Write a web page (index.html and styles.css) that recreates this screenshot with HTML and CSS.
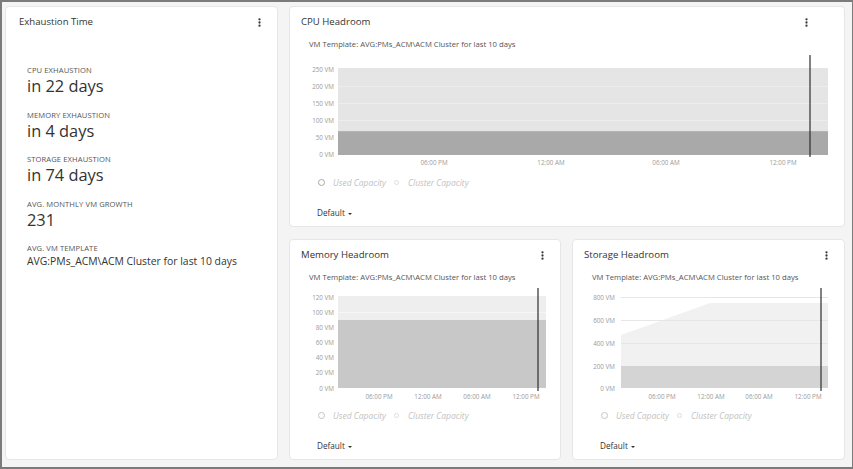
FILE: index.html
```
<!DOCTYPE html>
<html>
<head>
<meta charset="utf-8">
<link rel="stylesheet" href="styles.css">
</head>
<body>
<div class="frame">
  <section class="panel exhaust">
    <header class="panel-head">
      <h2>Exhaustion Time</h2>
      <svg class="kebab" width="3" height="9" viewBox="0 0 3 9"><circle cx="1.5" cy="1.3" r="1.15"/><circle cx="1.5" cy="4.5" r="1.15"/><circle cx="1.5" cy="7.7" r="1.15"/></svg>
    </header>
    <div class="stats">
      <div class="stat"><div class="stat-label">CPU EXHAUSTION</div><div class="stat-value">in 22 days</div></div>
      <div class="stat"><div class="stat-label">MEMORY EXHAUSTION</div><div class="stat-value">in 4 days</div></div>
      <div class="stat"><div class="stat-label">STORAGE EXHAUSTION</div><div class="stat-value">in 74 days</div></div>
      <div class="stat"><div class="stat-label">AVG. MONTHLY VM GROWTH</div><div class="stat-value">231</div></div>
      <div class="stat"><div class="stat-label">AVG. VM TEMPLATE</div><div class="stat-text">AVG:PMs_ACM\ACM Cluster for last 10 days</div></div>
    </div>
  </section>

  <section class="panel cpu">
    <header class="panel-head cpu-head">
      <h2>CPU Headroom</h2>
      <svg class="kebab" width="3" height="9" viewBox="0 0 3 9"><circle cx="1.5" cy="1.3" r="1.15"/><circle cx="1.5" cy="4.5" r="1.15"/><circle cx="1.5" cy="7.7" r="1.15"/></svg>
    </header>
    <p class="subtitle">VM Template: AVG:PMs_ACM\ACM Cluster for last 10 days</p>
    <svg class="chart" width="532" height="120" viewBox="0 0 532 120">
      <rect x="37" y="18" width="490" height="87" fill="#e5e5e5"/>
      <rect x="37" y="81" width="490" height="24" fill="#a9a9a9"/>
      <g stroke="#ededed" stroke-width="1">
        <line x1="37" x2="527" y1="36.5" y2="36.5"/>
        <line x1="37" x2="527" y1="53.5" y2="53.5"/>
        <line x1="37" x2="527" y1="70.5" y2="70.5"/>
      </g>
      <line x1="37" x2="527" y1="81.5" y2="81.5" stroke="#b4b4b4"/>
      <line x1="509" x2="509" y1="5" y2="107" stroke="#2e2e2e" stroke-width="1.2"/>
      <g class="ylab">
        <text x="33" y="19">250 VM</text>
        <text x="33" y="36">200 VM</text>
        <text x="33" y="53">150 VM</text>
        <text x="33" y="70">100 VM</text>
        <text x="33" y="87">50 VM</text>
        <text x="33" y="104">0 VM</text>
      </g>
      <g class="xlab">
        <text x="133" y="115">06:00 PM</text>
        <text x="250" y="115">12:00 AM</text>
        <text x="365" y="115">06:00 AM</text>
        <text x="482" y="115">12:00 PM</text>
      </g>
    </svg>
    <ul class="legend">
      <li><span class="dot big"></span>Used Capacity</li>
      <li><span class="dot small"></span>Cluster Capacity</li>
    </ul>
    <div class="default">Default<span class="caret"></span></div>
  </section>

  <section class="panel mem">
    <header class="panel-head">
      <h2>Memory Headroom</h2>
      <svg class="kebab" width="3" height="9" viewBox="0 0 3 9"><circle cx="1.5" cy="1.3" r="1.15"/><circle cx="1.5" cy="4.5" r="1.15"/><circle cx="1.5" cy="7.7" r="1.15"/></svg>
    </header>
    <p class="subtitle">VM Template: AVG:PMs_ACM\ACM Cluster for last 10 days</p>
    <svg class="chart" width="248" height="120" viewBox="0 0 248 120">
      <rect x="37" y="13" width="208" height="92" fill="#eeeeee"/>
      <line x1="37" x2="245" y1="29.5" y2="29.5" stroke="#f6f6f6"/>
      <rect x="37" y="37" width="208" height="68" fill="#c8c8c8"/>
      <line x1="237" x2="237" y1="5" y2="108" stroke="#2e2e2e" stroke-width="1.2"/>
      <g class="ylab">
        <text x="33" y="14">120 VM</text>
        <text x="33" y="29">100 VM</text>
        <text x="33" y="44">80 VM</text>
        <text x="33" y="59">60 VM</text>
        <text x="33" y="74">40 VM</text>
        <text x="33" y="89">20 VM</text>
        <text x="33" y="105">0 VM</text>
      </g>
      <g class="xlab">
        <text x="78" y="116">06:00 PM</text>
        <text x="127" y="116">12:00 AM</text>
        <text x="176" y="116">06:00 AM</text>
        <text x="225" y="116">12:00 PM</text>
      </g>
    </svg>
    <ul class="legend">
      <li><span class="dot big light"></span>Used Capacity</li>
      <li><span class="dot small"></span>Cluster Capacity</li>
    </ul>
    <div class="default">Default<span class="caret"></span></div>
  </section>

  <section class="panel stor">
    <header class="panel-head">
      <h2>Storage Headroom</h2>
      <svg class="kebab" width="3" height="9" viewBox="0 0 3 9"><circle cx="1.5" cy="1.3" r="1.15"/><circle cx="1.5" cy="4.5" r="1.15"/><circle cx="1.5" cy="7.7" r="1.15"/></svg>
    </header>
    <p class="subtitle">VM Template: AVG:PMs_ACM\ACM Cluster for last 10 days</p>
    <svg class="chart" width="249" height="120" viewBox="0 0 249 120">
      <polygon points="37,52 126,20 244,20 244,105 37,105" fill="#f1f1f1"/>
      <g stroke="#e6e6e6" stroke-width="1">
        <line x1="37" x2="244" y1="14.5" y2="14.5"/>
        <line x1="37" x2="244" y1="37.5" y2="37.5"/>
        <line x1="37" x2="244" y1="60.5" y2="60.5"/>
      </g>
      <rect x="37" y="83" width="207" height="22" fill="#d4d4d4"/>
      <line x1="237" x2="237" y1="5" y2="108" stroke="#2e2e2e" stroke-width="1.2"/>
      <g class="ylab">
        <text x="31" y="14">800 VM</text>
        <text x="31" y="37">600 VM</text>
        <text x="31" y="60">400 VM</text>
        <text x="31" y="83">200 VM</text>
        <text x="31" y="105">0 VM</text>
      </g>
      <g class="xlab">
        <text x="78" y="116">06:00 PM</text>
        <text x="127" y="116">12:00 AM</text>
        <text x="175" y="116">06:00 AM</text>
        <text x="224" y="116">12:00 PM</text>
      </g>
    </svg>
    <ul class="legend">
      <li><span class="dot big light"></span>Used Capacity</li>
      <li><span class="dot small"></span>Cluster Capacity</li>
    </ul>
    <div class="default">Default<span class="caret"></span></div>
  </section>
</div>
</body>
</html>
```
FILE: styles.css
```
html, body {
  margin: 0;
  padding: 0;
}
body {
  font-family: "Open Sans", "Liberation Sans", sans-serif;
  color: #333;
  background: #f4f4f4;
}
.frame {
  box-sizing: border-box;
  width: 853px;
  height: 469px;
  border: 2px solid #7b7b7b;
  border-right-width: 1px;
  background: #f4f4f4;
  padding: 4px 6px 7px 3px;
  display: grid;
  grid-template-columns: 273px 272px 273px;
  grid-template-rows: 221px 221px;
  column-gap: 11px;
  row-gap: 12px;
}
.panel {
  box-sizing: border-box;
  background: #fff;
  border: 1px solid #e6e6e6;
  border-radius: 4px;
  padding: 8px 14px 0 11px;
  display: flex;
  flex-direction: column;
  min-width: 0;
}
.exhaust {
  grid-column: 1;
  grid-row: 1 / span 2;
  padding-left: 13px;
}
.cpu {
  grid-column: 2 / span 2;
  grid-row: 1;
}
.mem { grid-column: 2; grid-row: 2; }
.stor { grid-column: 3; grid-row: 2; }

.panel-head {
  height: 14px;
  display: flex;
  align-items: center;
  justify-content: space-between;
}
.panel-head h2 {
  margin: 0;
  font-size: 9.6px;
  font-weight: 400;
  color: #333;
  line-height: 14px;
}
.kebab { fill: #3a3a3a; display: block; }
.exhaust .panel-head, .mem .panel-head, .stor .panel-head { padding-right: 2px; }
.cpu-head { padding-right: 22px; }

.stats {
  margin: 36px 0 0 8px;
}
.stat { margin-bottom: 12.5px; }
.stat-label {
  font-size: 7.6px;
  line-height: 10px;
  color: #555;
  letter-spacing: 0.1px;
}
.stat-value {
  font-size: 16.4px;
  line-height: 22px;
  color: #333;
}
.stat-text {
  font-size: 10.4px;
  line-height: 14px;
  color: #333;
  margin-top: 1px;
}

.subtitle {
  margin: 9px 0 0 8px;
  font-size: 7.7px;
  line-height: 12px;
  color: #555;
  white-space: nowrap;
}
.chart { display: block; flex: none; }
.chart text {
  font-family: "Open Sans", "Liberation Sans", sans-serif;
  font-size: 6.3px;
  fill: #9a9a9a;
}
.ylab text { text-anchor: end; dominant-baseline: central; }
.xlab text { text-anchor: middle; }

.legend {
  list-style: none;
  margin: 6px 0 0 17px;
  padding: 0;
  display: flex;
  align-items: center;
  height: 12px;
  font-size: 8.5px;
  font-style: italic;
  color: #c2c2c2;
  white-space: nowrap;
}
.legend li { display: flex; align-items: center; }
.legend li + li { margin-left: 7.5px; }
.dot {
  box-sizing: border-box;
  display: inline-block;
  border-radius: 50%;
  background: #fff;
}
.dot.big {
  width: 7px;
  height: 7px;
  border: 1px solid #a8a8a8;
  margin-right: 8px;
}
.dot.big.light { border-color: #c4c4c4; }
.dot.small {
  width: 5px;
  height: 5px;
  border: 1px solid #dedede;
  margin-right: 9.5px;
}
.default {
  margin: 19px 0 0 16px;
  font-size: 8.2px;
  line-height: 12px;
  color: #333;
  display: flex;
  align-items: center;
}
.caret {
  display: inline-block;
  width: 0;
  height: 0;
  margin-left: 3px;
  margin-top: 1px;
  border-left: 2.3px solid transparent;
  border-right: 2.3px solid transparent;
  border-top: 2.7px solid #333;
}
```
